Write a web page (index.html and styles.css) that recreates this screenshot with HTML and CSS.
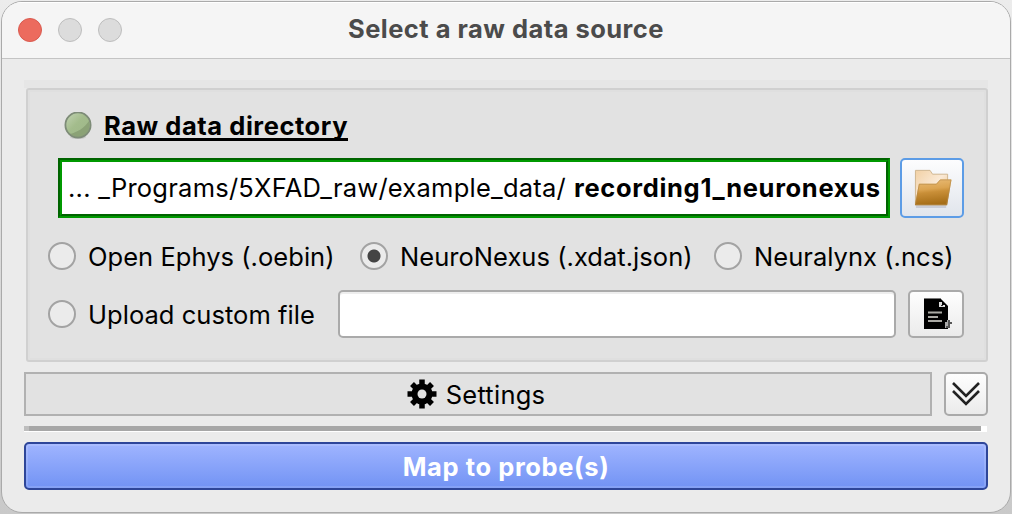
FILE: index.html
```html
<!DOCTYPE html>
<html lang="en">
<head>
<meta charset="utf-8">
<title>Select a raw data source</title>
<link rel="stylesheet" href="styles.css">
</head>
<body>
<main class="window">
  <header class="titlebar">
    <div class="lights"><span class="light close"></span><span class="light"></span><span class="light"></span></div>
    <h1 class="title"><span>Select a raw data source</span></h1>
  </header>
  <div class="content">
    <div class="strip"></div>
    <section class="group">
      <div class="heading">
        <svg class="led" width="28" height="28" viewBox="0 0 28 28">
          <defs><linearGradient id="led" x1="0" y1="0" x2="1" y2="1"><stop offset="0" stop-color="#c5d5b6"/><stop offset=".45" stop-color="#a3bc8c"/><stop offset="1" stop-color="#9db588"/></linearGradient></defs>
          <ellipse cx="14" cy="25" rx="8" ry="2" fill="#c9c9c9"/>
          <circle cx="14" cy="13" r="13" fill="url(#led)"/>
          <path d="M6 22C14 20 20 16 25 9C28 19 20 27 12 25Z" fill="#8ba276"/>
          <circle cx="14" cy="13" r="12.600" fill="none" stroke="#7e8c78" stroke-width="1.800"/>
        </svg>
        <h2 class="heading-text"><span>Raw data directory</span></h2>
      </div>
      <div class="path-row">
        <div class="path"><div class="path-inner"><span class="dir">... _Programs/5XFAD_raw/example_data/</span><b class="leaf">recording1_neuronexus</b></div></div>
        <button class="button browse" aria-label="Browse">
          <svg width="39" height="40" viewBox="0 0 40 42" preserveAspectRatio="none">
            <defs>
              <linearGradient id="back" x1="0" y1="0" x2="1" y2="1"><stop offset="0" stop-color="#f2d1a5"/><stop offset=".5" stop-color="#fae9d5"/><stop offset="1" stop-color="#e4b46e"/></linearGradient>
              <linearGradient id="front" x1="0" y1="0" x2=".15" y2="1"><stop offset="0" stop-color="#eabd79"/><stop offset=".42" stop-color="#dba451"/><stop offset=".55" stop-color="#c98f38"/><stop offset="1" stop-color="#a66e18"/></linearGradient>
            </defs>
            <path d="M3 39H34V42H3Z" fill="#c9ccd6"/>
            <path d="M2.500 38V2.500H17.500L20 6.500H35.500V15L31 38Z" fill="url(#back)" stroke="#cfb58e"/>
            <path d="M2 39L6 16.500H24L28 12H39.500L35 39Z" fill="url(#front)"/>
            <path d="M2.500 38L6.500 17H24L28 12.500H39L34.500 38.500H2.500" fill="none" stroke="#b58a48" stroke-width="1" opacity=".7"/>
          </svg>
        </button>
      </div>
      <div class="formats">
        <label class="option ephys"><span class="radio"></span><span class="label">Open Ephys (.oebin)</span></label>
        <label class="option nexus"><span class="radio on"></span><span class="label">NeuroNexus (.xdat.json)</span></label>
        <label class="option lynx"><span class="radio"></span><span class="label">Neuralynx (.ncs)</span></label>
      </div>
      <div class="custom">
        <label class="option upload"><span class="radio"></span><span class="label">Upload custom file</span></label>
        <input class="field" type="text" aria-label="Custom file">
        <button class="button file" aria-label="Choose file">
          <svg width="28" height="32" viewBox="0 0 28 32">
            <path d="M0 0H16L24 8V31H0Z" fill="#000"/>
            <path d="M0 .5H16" stroke="#777"/>
            <path d="M15 4H18V7H21V9H15Z" fill="#ddd"/><path d="M17 7H19V8H17Z" fill="#333"/>
            <path d="M4 14.500H18M4 19H14M4 23H18" stroke="#aaa9a4" stroke-width="1.800"/>
            <path d="M21 24H23V22H24V30H21Z" fill="#aaa"/>
            <path d="M24 22H26V24H28V26H26V30H22V28H24Z" fill="#555"/>
          </svg>
        </button>
      </div>
    </section>
    <div class="settings-row">
      <div class="settings">
        <svg width="30" height="30" viewBox="0 0 30 30">
          <g transform="translate(15 15)">
            <g stroke="#000" stroke-width="5.500"><path d="M0-14.500V14.500M-14.500 0H14.500M-10-10L10 10M-10 10L10-10"/></g>
            <circle r="10.500"/><circle r="4.500" fill="#e2e2e2"/>
          </g>
        </svg>
        <span class="settings-text">Settings</span>
      </div>
      <button class="button expand" aria-label="Expand">
        <svg width="28" height="24" viewBox="0 0 28 24" fill="none" stroke="#222" stroke-width="2.600"><path d="M1 1L14 14L27 1M1 9L14 22L27 9"/></svg>
      </button>
    </div>
    <div class="progress"><div class="bar"></div></div>
    <button class="map"><span>Map to probe(s)</span></button>
  </div>
</main>
</body>
</html>
```
FILE: styles.css
```css
* { box-sizing: border-box; }
body { margin: 0; padding: 1px; height: 514px; overflow: hidden; background: linear-gradient(#ececec, #c9c9c9); font-family: Inter, "Liberation Sans", sans-serif; font-size: 25.5px; color: #000; }
button, input { font: inherit; padding: 0; margin: 0; }
h1, h2 { margin: 0; font-size: inherit; }
svg { display: block; flex: none; }
span, b { white-space: nowrap; }
.window { width: 1010px; height: 512px; border: 1px solid #aaa; border-radius: 21px; background: #ebebeb; overflow: hidden; }
.titlebar { display: grid; grid-template-columns: 330px 1fr 330px; align-items: center; height: 57px; background: #f5f5f5; border-bottom: 1px solid #c4c4c4; box-shadow: inset 0 1px #fff; }
.lights { display: flex; gap: 16px; padding-left: 16px; }
.light { width: 24px; height: 24px; border-radius: 50%; background: #dcdcdc; border: 1px solid #bdbdbd; }
.close { background: #ec6b5e; border-color: #d95a4f; }
.title { text-align: center; color: #4b4b4b; font-weight: 700; line-height: 30px; padding-bottom: 2px; letter-spacing: .47px; }
.content { padding: 21px 22px 0; }
.strip { height: 8px; background: #e6e6e6; }
.group { height: 274px; margin-left: 2px; border: 2px solid #d0d0d0; border-radius: 3px; background: #e2e2e2; padding: 20px 22px 0 20px; box-shadow: inset 0 0 0 2px #dfdfdf; }
.heading { display: flex; gap: 12px; height: 32px; padding-left: 16px; }
.led { margin-top: 2px; }
.heading-text { line-height: 32px; font-weight: 700; letter-spacing: .55px; }
.heading-text span { display: block; height: 31px; border-bottom: 3px solid #000; }
.path-row { display: flex; gap: 10px; margin: 16px 0 0 10px; height: 60px; }
.path { width: 832px; border: 2px solid; border-color: #006400 #090 #090 #006400; }
.path-inner { display: flex; align-items: center; height: 56px; border: 2px solid; border-color: #090 #006400 #006400 #090; background: #fff; padding: 0 0 2px 6px; gap: 8px; }
.dir { letter-spacing: .24px; }
.leaf { letter-spacing: .67px; }
.button { display: flex; align-items: center; justify-content: center; border: 2px solid #aaa; border-radius: 5px; background: linear-gradient(#fefefe, #ebebeb); }
.browse { width: 64px; border-color: #5c9ce6; background: linear-gradient(#fdfdfe, #e1e5ec); }
.formats { display: flex; height: 28px; margin-top: 24px; }
.option { display: flex; align-items: center; gap: 12px; flex: none; height: 28px; }
.label { line-height: 28px; padding-top: 2px; letter-spacing: .04px; }
.radio { width: 28px; height: 28px; flex: none; border: 2px solid #a3a3a3; border-radius: 50%; background: #ebebeb; }
.on { background: radial-gradient(circle, #444 0 6px, #ebebeb 7px); }
.ephys { width: 312px; }
.nexus { width: 354px; }
.custom { display: flex; align-items: center; height: 48px; margin-top: 20px; }
.upload { width: 290px; }
.field { width: 558px; height: 48px; margin-right: 12px; border: 2px solid #aaa; border-radius: 5px; background: #fff; box-shadow: inset 0 2px #eee; outline: none; }
.file { width: 56px; height: 48px; padding-left: 4px; }
.settings-row { display: flex; gap: 12px; height: 44px; margin-top: 10px; }
.settings { width: 908px; display: flex; align-items: center; justify-content: center; gap: 9px; border: 2px solid #b1b1b1; background: #e2e2e2; padding-right: 4px; }
.settings-text { letter-spacing: .25px; }
.expand { width: 44px; }
.progress { height: 6px; width: 963px; margin: 10px 0; background: #fff; }
.bar { width: 957px; height: 5px; background: #a7a7a7; border-left: 5px solid #bdbdbd; }
.map { display: block; width: 964px; height: 48px; border: 2px solid #2e4699; border-radius: 5px; background: linear-gradient(#9fb4ff, #7293f4); color: #fff; font-weight: 700; letter-spacing: .6px; box-shadow: inset 0 0 0 2px rgba(255,255,255,.13); }
```
